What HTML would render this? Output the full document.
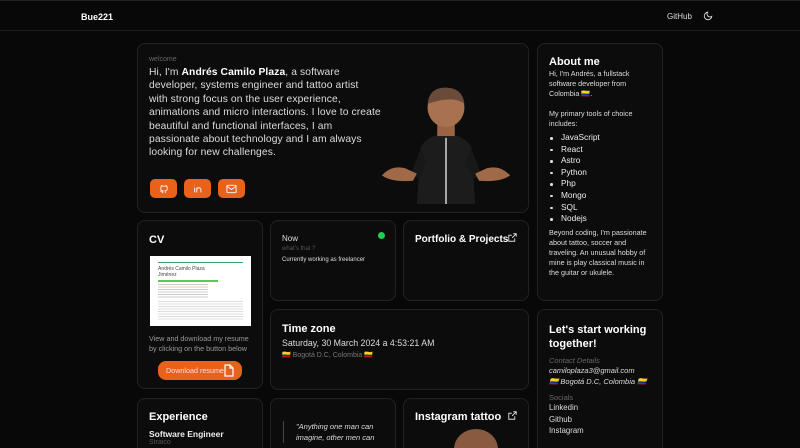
<!DOCTYPE html>
<html><head><meta charset="utf-8"><style>
*{box-sizing:border-box;margin:0;padding:0}
html,body{width:800px;height:448px;overflow:hidden}
body{background:#080808;color:#eee;font-family:"Liberation Sans",sans-serif;position:relative}
.hdr{position:absolute;left:0;top:0;width:800px;height:31px;border-bottom:1px solid #1e1e1e;border-top:1px solid #222}
.hdr .b{position:absolute;left:81px;top:11px;font-size:9px;font-weight:bold;color:#fff}
.hdr .g{position:absolute;left:667px;top:11px;font-size:8px;color:#ddd}
.card{position:absolute;background:#0c0c0c;border:1px solid #222;border-radius:8px;overflow:hidden}
.cut{border-bottom:none;border-radius:8px 8px 0 0}
h3{font-size:11px;font-weight:bold;color:#fff;white-space:nowrap}
.btn{position:absolute;width:27px;height:19px;background:#e8621c;border-radius:5px;top:135px;display:flex;align-items:center;justify-content:center}
ul{list-style:none}
li{position:relative;padding-left:12px;font-size:8.3px;line-height:11.6px}
li:before{content:"";position:absolute;left:1px;top:5px;width:2.5px;height:2.5px;background:#ddd;border-radius:50%}
.ext{position:absolute;right:11px;top:12px}
</style></head><body>
<div class="hdr"><div class="b">Bue221</div><div class="g">GitHub</div>
<svg style="position:absolute;left:703px;top:10px" width="10" height="10" viewBox="0 0 24 24" fill="none" stroke="#ddd" stroke-width="2.2"><path d="M21 12.8A9 9 0 1 1 11.2 3a7 7 0 0 0 9.8 9.8z"/></svg></div>

<div class="card" style="left:137px;top:43px;width:392px;height:170px">
<div style="position:absolute;left:11px;top:12px;font-size:7px;color:#666">welcome</div>
<div style="position:absolute;left:11px;top:22px;white-space:nowrap;font-size:10.3px;letter-spacing:0.1px;line-height:13.4px;color:#ddd">Hi, I'm <b style="color:#fff">Andrés Camilo Plaza</b>, a software<br>developer, systems engineer and tattoo artist<br>with strong focus on the user experience,<br>animations and micro interactions. I love to create<br>beautiful and functional interfaces, I am<br>passionate about technology and I am always<br>looking for new challenges.</div>
<div class="btn" style="left:12px"><svg width="10" height="10" viewBox="0 0 24 24" fill="none" stroke="#fff" stroke-width="2"><path d="M9 19c-4 1.5-4-2-6-2.5M15 22v-3.5c0-1 .1-1.4-.5-2 2.8-.3 5.5-1.4 5.5-6a4.6 4.6 0 0 0-1.3-3.2 4.2 4.2 0 0 0-.1-3.2s-1-.3-3.4 1.300a11.6 11.6 0 0 0-6.2 0C6.6 3.8 5.5 4.1 5.5 4.1a4.2 4.2 0 0 0-.1 3.2A4.6 4.6 0 0 0 4 10.5c0 4.6 2.7 5.7 5.5 6-.6.6-.6 1.2-.5 2V22"/></svg></div>
<div class="btn" style="left:46px"><svg width="10" height="10" viewBox="0 0 24 24" fill="none" stroke="#fff" stroke-width="2.2"><path d="M4 9v11M4 4v1M9 20V9M9 14a5 5 0 0 1 10 0v6"/></svg></div>
<div class="btn" style="left:80px"><svg width="11" height="10" viewBox="0 0 24 20" fill="none" stroke="#fff" stroke-width="2"><rect x="2" y="2" width="20" height="16" rx="2"/><path d="M2 4l10 7 10-7"/></svg></div>
<svg style="position:absolute;left:240px;top:42px" width="136" height="118" viewBox="0 0 140 132" preserveAspectRatio="none">
<path d="M44 68 Q52 54 70 54 Q88 54 96 68 L100 132 L40 132Z" fill="#1c1c1c"/>
<path d="M44 70 L34 98 L42 104 L50 85Z" fill="#181818"/>
<path d="M96 70 L106 98 L98 104 L90 85Z" fill="#181818"/>
<path d="M4 100 Q14 88 28 92 L40 98 L36 106 Q14 108 4 100Z" fill="#a06a48"/>
<path d="M136 100 Q126 88 112 92 L100 98 L104 106 Q126 108 136 100Z" fill="#a06a48"/>
<rect x="69" y="58" width="2" height="74" fill="#aaa"/>
<rect x="61" y="42" width="18" height="14" fill="#9a6444"/>
<ellipse cx="70" cy="24" rx="19" ry="22" fill="#a8714f"/>
<path d="M51 20 Q53 1 70 2 Q87 2 89 20 Q78 10 51 20Z" fill="#6a4a38"/>
</svg>
</div>

<div class="card" style="left:537px;top:43px;width:126px;height:258px;padding:12px 11px">
<h3>About me</h3>
<div style="font-size:7.2px;line-height:10px;color:#ddd;margin-top:1px">Hi, I'm Andrés, a fullstack software developer from Colombia 🇨🇴.<br><br>My primary tools of choice includes:</div>
<ul style="margin-top:3px"><li>JavaScript</li><li>React</li><li>Astro</li><li>Python</li><li>Php</li><li>Mongo</li><li>SQL</li><li>Nodejs</li></ul>
<div style="font-size:7.2px;line-height:10px;color:#ddd;margin-top:3px">Beyond coding, I'm passionate about tattoo, soccer and traveling. An unusual hobby of mine is play classical music in the guitar or ukulele.</div>
</div>

<div class="card" style="left:137px;top:220px;width:126px;height:169px;padding:13px 11px">
<h3>CV</h3>
<div style="position:absolute;left:12px;top:35px;width:101px;height:70px;background:#fff;padding:4px 8px">
<div style="height:1px;background:#3a6;margin:2px 0 3px"></div>
<div style="font-size:5px;color:#444">Andrés Camilo Plaza<br>Jiménez</div>
<div style="height:1.5px;background:#5c5;width:60px;margin:2px 0"></div>
<div style="height:14px;background:repeating-linear-gradient(#ccc 0 1px,#fff 1px 2.5px);width:50px"></div>
<div style="height:20px;margin-top:3px;background:repeating-linear-gradient(#ddd 0 1px,#fff 1px 2.5px)"></div>
</div>
<div style="position:absolute;left:11px;top:113px;width:106px;font-size:7.2px;line-height:10px;color:#999">View and download my resume by clicking on the button below</div>
<div style="position:absolute;left:20px;top:140px;width:84px;height:19px;background:#e8621c;border-radius:8px;font-size:7.2px;color:#fde;line-height:19px;padding-left:8px">Download resume
<svg style="position:absolute;left:66px;top:3px" width="10" height="13" viewBox="0 0 10 13" fill="none" stroke="#fff" stroke-width="1.2"><path d="M1 1h5l3 3v8H1z M6 1v3h3"/></svg></div>
</div>

<div class="card" style="left:270px;top:220px;width:126px;height:81px;padding:13px 11px">
<div style="font-size:8px;color:#ddd">Now</div>
<div style="font-size:6px;color:#555;margin-top:3px">what's that ?</div>
<div style="font-size:6px;color:#ddd;margin-top:5px">Currently working as freelancer</div>
<div style="position:absolute;left:107px;top:11px;width:7px;height:7px;border-radius:50%;background:#2c5"></div>
</div>
<div class="card" style="left:403px;top:220px;width:126px;height:81px;padding:13px 11px"><h3 style="font-size:10px">Portfolio &amp; Projects</h3>
<svg class="ext" width="9" height="9" viewBox="0 0 12 12" fill="none" stroke="#ddd" stroke-width="1.2"><path d="M7 1h4v4M11 1L5.5 6.5M9 7v4H1V3h4"/></svg></div>

<div class="card" style="left:270px;top:309px;width:259px;height:81px;padding:13px 11px">
<h3>Time zone</h3><div style="font-size:8.8px;color:#ddd;margin-top:3px">Saturday, 30 March 2024 a 4:53:21 AM</div>
<div style="font-size:7px;color:#777;margin-top:3px">🇨🇴 Bogotá D.C, Colombia 🇨🇴</div></div>

<div class="card cut" style="left:537px;top:309px;width:126px;height:139px;padding:13px 11px">
<h3 style="line-height:14px;white-space:normal">Let's start working together!</h3>
<div style="font-size:7.5px;font-style:italic;color:#666;margin-top:5px">Contact Details</div>
<div style="font-size:7.5px;font-style:italic;color:#ddd;line-height:11px">camiloplaza3@gmail.com<br>🇨🇴 Bogotá D.C, Colombia 🇨🇴</div>
<div style="font-size:7.5px;color:#666;margin-top:6px">Socials</div>
<div style="font-size:7.8px;color:#ddd;line-height:11.5px">Linkedin<br>Github<br>Instagram</div></div>

<div class="card cut" style="left:137px;top:398px;width:126px;height:50px;padding:12px 11px"><h3>Experience</h3><div style="font-size:8.5px;font-weight:bold;margin-top:6px">Software Engineer</div><div style="font-size:7px;color:#555">Straico</div></div>
<div class="card cut" style="left:270px;top:398px;width:126px;height:50px;padding:22px 12px"><div style="border-left:1px solid #444;padding-left:12px;font-size:7.5px;font-style:italic;line-height:11px;color:#ddd">"Anything one man can imagine, other men can</div></div>
<div class="card cut" style="left:403px;top:398px;width:126px;height:50px;padding:12px 11px"><h3>Instagram tattoo</h3>
<svg class="ext" width="9" height="9" viewBox="0 0 12 12" fill="none" stroke="#ddd" stroke-width="1.2"><path d="M7 1h4v4M11 1L5.5 6.5M9 7v4H1V3h4"/></svg>
<div style="position:absolute;left:50px;top:30px;width:44px;height:40px;border-radius:50%;background:#8a5a40"></div></div>
</body></html>
